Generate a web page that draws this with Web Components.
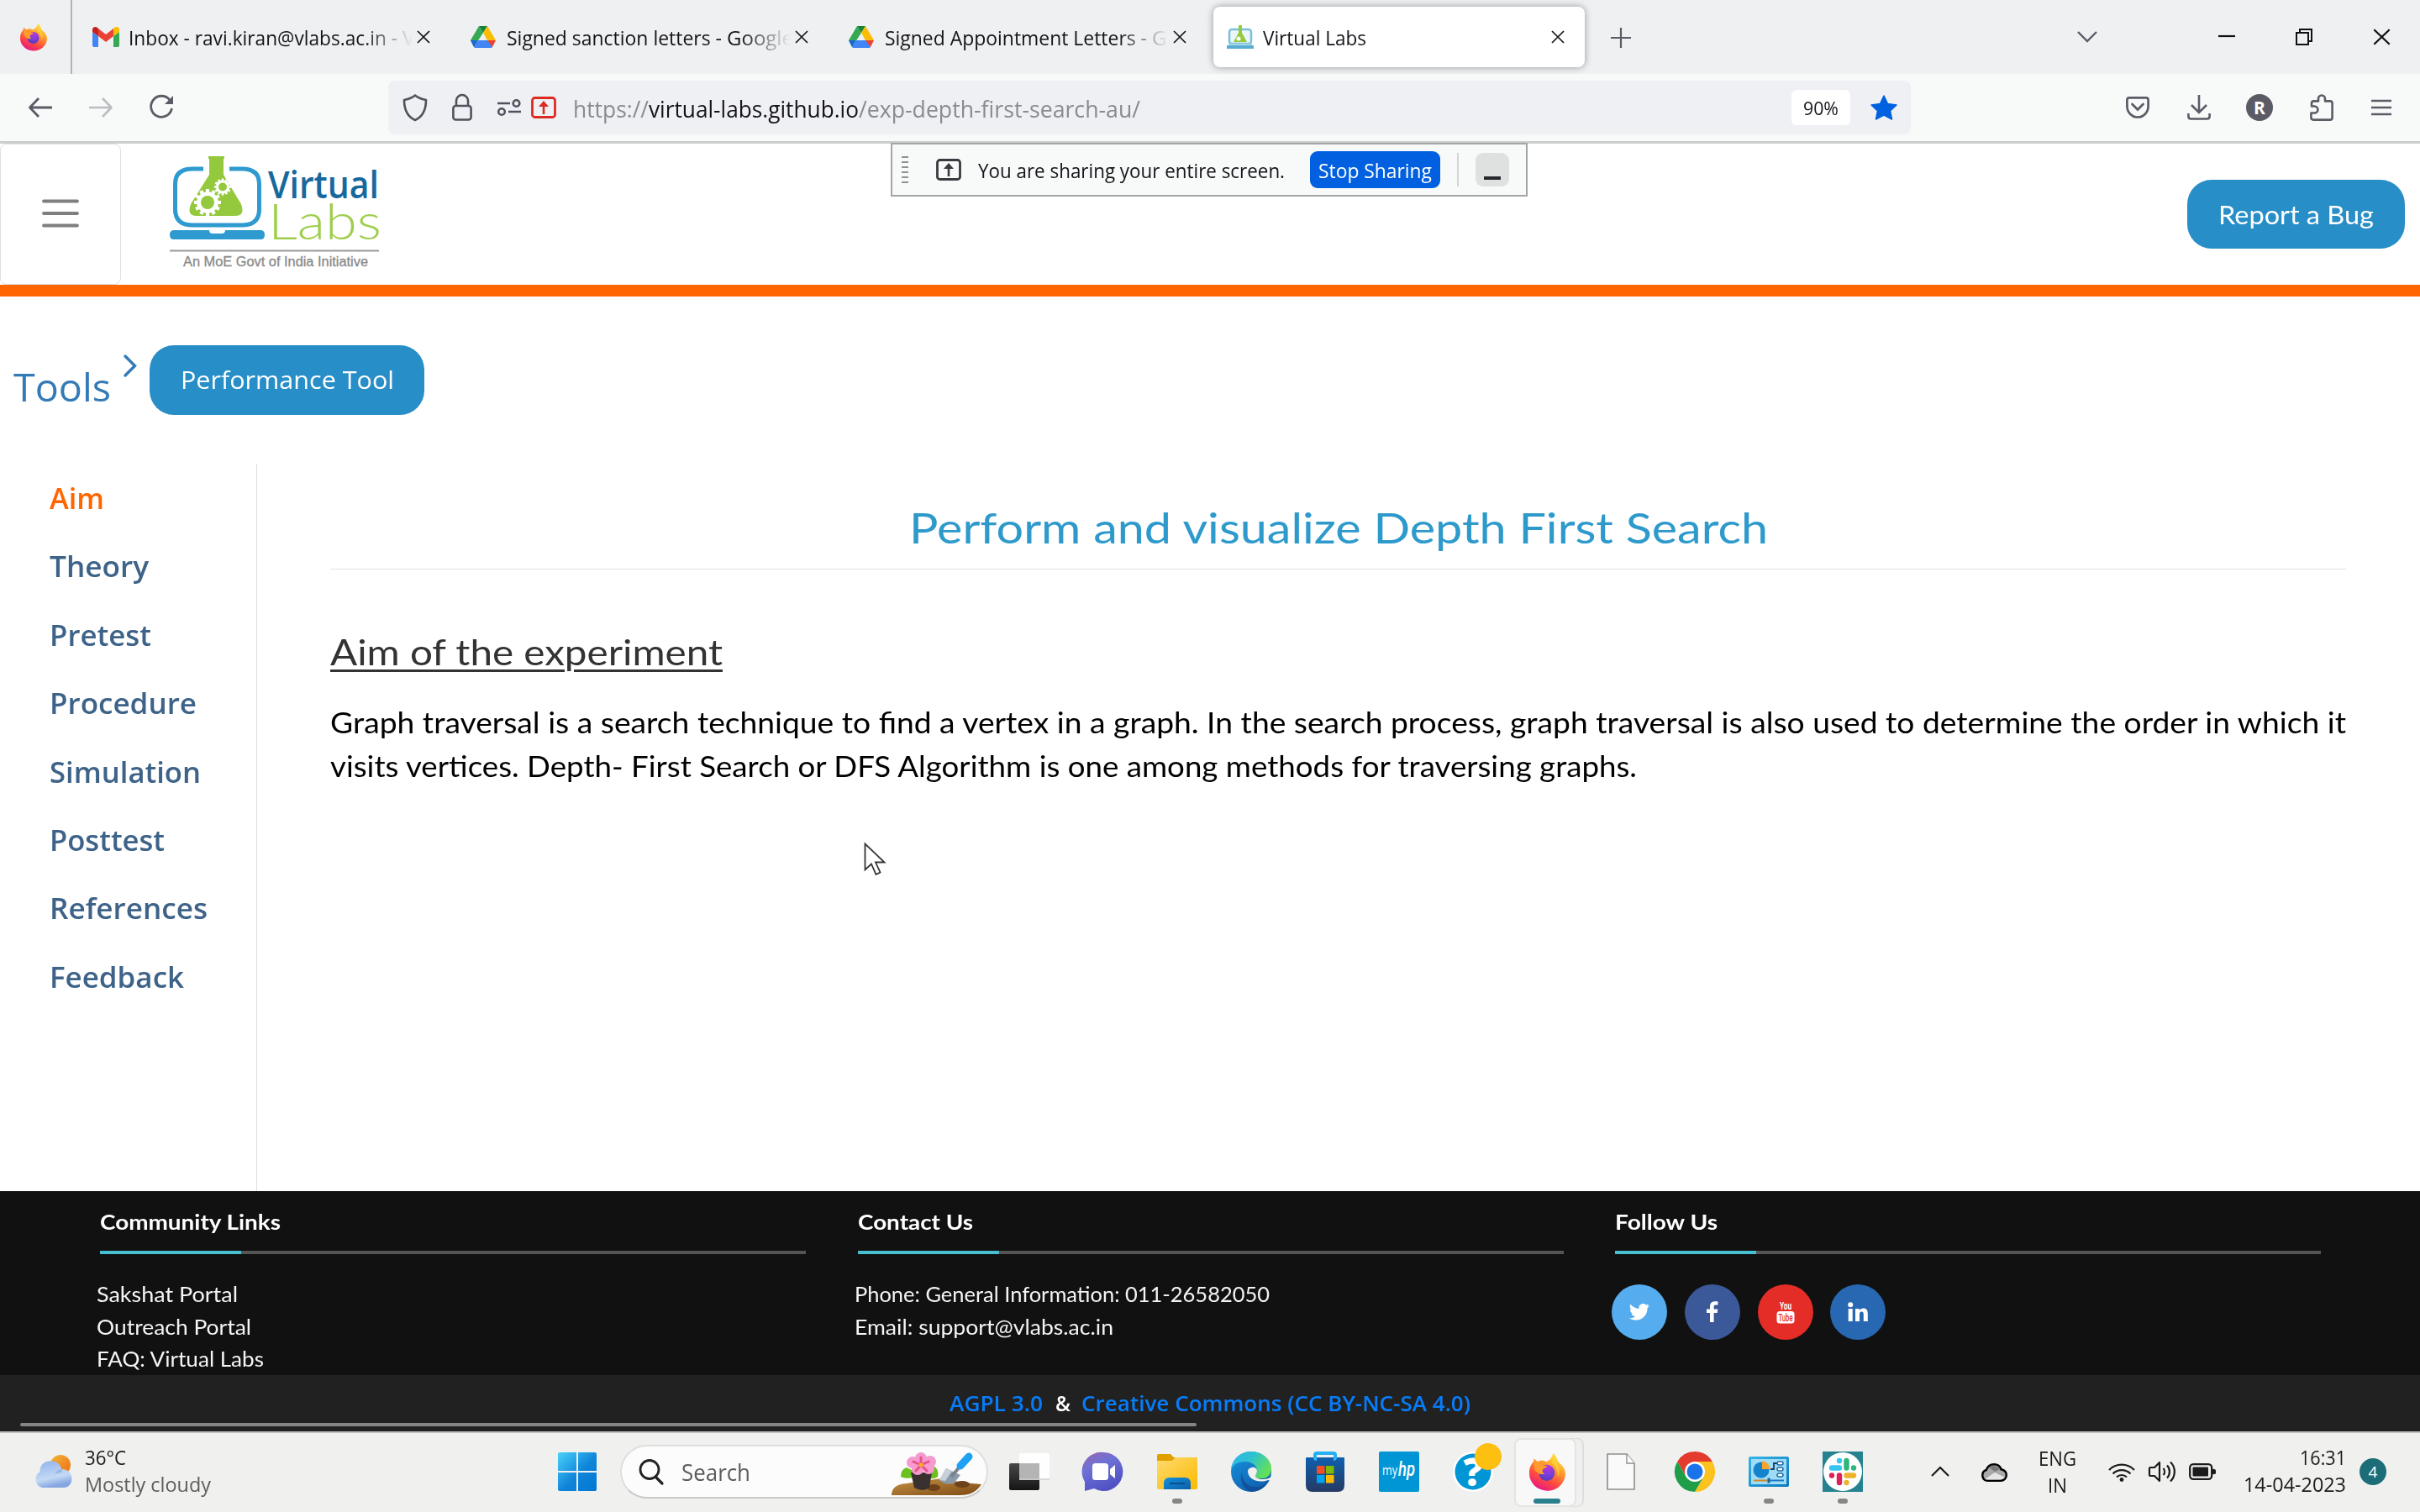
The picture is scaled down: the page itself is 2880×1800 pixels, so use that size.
<!DOCTYPE html>
<html lang="en">
<head>
<meta charset="utf-8">
<title>Virtual Labs</title>
<style>
html,body{margin:0;padding:0;background:#fff}
body{width:2880px;height:1800px;overflow:hidden;font-family:"Open Sans","Noto Sans",sans-serif;color:#15141a;font-variant-ligatures:none}
</style>
</head>
<body>
<desk-screen></desk-screen>
<script>
const FIREFOX = `<defs><linearGradient id="fa" x1=".8" y1="0" x2=".3" y2="1"><stop offset="0" stop-color="#fff44f"/><stop offset=".35" stop-color="#ffa32c"/><stop offset=".7" stop-color="#ff4a40"/><stop offset="1" stop-color="#e31587"/></linearGradient><radialGradient id="fb" cx=".6" cy=".2" r=".9"><stop offset="0" stop-color="#b833e1"/><stop offset=".5" stop-color="#7a3fd8"/><stop offset="1" stop-color="#4a3ab8"/></radialGradient></defs>
<path fill="url(#fa)" d="M21 0c3 3 4 5 4.500 7.500 4 3 6.500 6 6.500 10.500A16 15 0 0 1 0 17C0 12 2 9 4 7L4 4.500 7.500 7.500C10 5.500 13 6 15 7.500 18 6 20 4 21 0z"/><circle cx="15.500" cy="17" r="7" fill="url(#fb)"/><path fill="#ff9a2e" d="M4 7c4 0 6 1.500 8.500 3.500L16 11c-1 2-3 2-4 3-.8 1.500 0 3 1.500 4-4 1-7-1-9-4z"/><path fill="#ffd43a" opacity=".75" d="M21 0c3 3 4 6 3.500 9 2 3 3 7 1 12 0-6-2-10-6-13 1.500-2 2-5 1.500-8z"/>`;
const DRIVE = `<path fill="#34a853" d="M10 1 0 18l4 8L15 9z"/><path fill="#188038" d="M10 1h10l-5 8z"/><path fill="#fbbc04" d="M20 1 30 18H20L15 9z"/><path fill="#4285f4" d="M4 26 8 18h14l4 8-1 1H5z"/><path fill="#ea4335" d="M20 18h10l-4 8z"/><path fill="#1967d2" d="M0 18h8l-4 8z"/>`;
const GEAR = (cx,cy,r,c,h) => { let s=''; for(let i=0;i<12;i++) s+=`<rect x="${cx-r*.13}" y="${cy-r}" width="${r*.26}" height="${r*.5}" transform="rotate(${i*30} ${cx} ${cy})"/>`; return `<g fill="${c}">${s}<circle cx="${cx}" cy="${cy}" r="${r*.8}"/></g><circle cx="${cx}" cy="${cy}" r="${r*.5}" fill="${h}"/>`; };

/* name: [viewBox width, viewBox height, markup] */
const ICONS = {
  firefox:[32,32,FIREFOX],
  gmail:[32,24,`<path fill="#4285f4" d="M0 6v16q0 2 2 2h5V11z"/><path fill="#34a853" d="M32 6v16q0 2-2 2h-5V11z"/><path fill="#c5221f" d="M0 6V3c0-3 4-4 6-2l1 1v9z"/><path fill="#fbbc04" d="M32 6V3c0-3-4-4-6-2l-1 1v9z"/><path fill="#ea4335" d="M7 2l9 7 9-7v9l-9 7-9-7z"/>`],
  drive:[30,28,DRIVE],
  vlabs:[32,28,`<rect x="3" y="5" width="26" height="17" rx="3" fill="#eaf6fb" stroke="#7cc0dc" stroke-width="2.500"/><path fill="#93cb3c" d="M14 0h4v9l6 11H8l6-11z"/><circle cx="14" cy="16" r="2.500" fill="#fff"/><path fill="#5aaed3" d="M0 24h32v4H0z"/><path fill="#a9d6e8" d="M2 22h28v2H2z"/>`],
  x:[16,16,`<path d="M1 1l14 14M15 1 1 15" stroke="currentColor" stroke-width="1.700" fill="none"/>`],
  plus:[24,24,`<path d="M12 0v24M0 12h24" stroke="#5b5b66" stroke-width="2.200"/>`],
  down:[24,14,`<path d="M1 1l11 11L23 1" stroke="#5b5b66" stroke-width="2.400" fill="none"/>`],
  min:[20,20,`<path d="M0 9h20" stroke="#111" stroke-width="2.200"/>`],
  restore:[20,20,`<path d="M1 5h14v14H1zM5 5V1h14v14h-4" stroke="#111" stroke-width="2" fill="none"/>`],
  back:[28,24,`<path d="M28 12H2M12 1 1.500 12 12 23" stroke="#5b5b66" stroke-width="2.800" fill="none" stroke-linejoin="round"/>`],
  fwd:[28,24,`<path d="M0 12h26M16 1l10.500 11L16 23" stroke="#bcbcc2" stroke-width="2.600" fill="none" stroke-linejoin="round"/>`],
  reload:[28,28,`<path d="M24 5A12.500 12.500 0 1 0 26.500 15" stroke="#5b5b66" stroke-width="2.800" fill="none"/><path d="M28 0v10H18z" fill="#5b5b66"/>`],
  shield:[30,32,`<path d="M15 1.500C11 5 7 6 2 7c0 12 4 20 13 24 9-4 13-12 13-24-5-1-9-2-13-5.500z" stroke="#52525e" stroke-width="2.600" fill="none" stroke-linejoin="round"/>`],
  lock:[24,32,`<rect x="1.400" y="14" width="21.200" height="16.500" rx="3" stroke="#52525e" stroke-width="2.600" fill="none"/><path d="M5 14V8a7 7 0 0 1 14 0v6" stroke="#52525e" stroke-width="2.600" fill="none"/>`],
  perm:[28,20,`<g stroke="#52525e" stroke-width="2.600" fill="none"><path d="M0 5h15M13 15h15"/><circle cx="22.500" cy="5" r="3.800"/><circle cx="5" cy="15" r="3.800"/></g>`],
  share:[30,26,`<rect x="1.500" y="1.500" width="27" height="23" rx="3" stroke="currentColor" stroke-width="2.800" fill="none"/><path d="M15 21V9" stroke="currentColor" stroke-width="2.600"/><path d="M15 5l6 7H9z" fill="currentColor"/>`],
  star:[32,30,`<path fill="#0061e0" stroke="#0061e0" stroke-width="1.500" stroke-linejoin="round" d="M16 1l4.500 9.500L31 12l-7.500 7L25.500 29 16 24 6.500 29l2-10L1 12l10.500-1.500z"/>`],
  pocket:[28,26,`<path d="M4 1.400h20q2.600 0 2.600 2.600v7.500a12.600 13 0 0 1-25.200 0V4Q1.400 1.400 4 1.400z" stroke="#5b5b66" stroke-width="2.700" fill="none"/><path d="M7.500 9l6.500 6.500L20.500 9" stroke="#5b5b66" stroke-width="2.700" fill="none" stroke-linecap="round"/>`],
  dl:[28,30,`<path d="M14 0v20M5 12l9 9 9-9M1.400 22v3.500q0 3 3 3h19.200q3 0 3-3V22" stroke="#5b5b66" stroke-width="2.600" fill="none"/>`],
  puzzle:[28,32,`<path d="M4 30.600q-2.600 0-2.600-2.600v-5.500h4a4 4 0 0 0 0-8H2V11q0-2.600 2.600-2.600H10V5.500a4 4 0 0 1 8 0v2.900h6q2.600 0 2.600 2.600v17q0 2.600-2.600 2.600z" stroke="#5b5b66" stroke-width="2.600" fill="none" stroke-linejoin="round"/>`],
  menu:[24,20,`<path d="M0 2h24M0 10h24M0 18h24" stroke="#5b5b66" stroke-width="2.600"/>`],
  burger:[44,34,`<path d="M2 2.500h40M2 17h40M2 31.500h40" stroke="#7f7f7f" stroke-width="3.800" stroke-linecap="round"/>`],
  logo:[252,138,`<path d="M40 15H27Q6.500 15 6.500 33V63Q6.500 82 27 82H86Q106.500 82 106.500 63V33Q106.500 15 86 15H71" fill="none" stroke="#2e9acf" stroke-width="5"/>
<path fill="#94c93d" d="M46 0h19v3h-1v19l21 35q5 14-7 14H32q-12 0-7-14l22-35V3h-1z"/>${GEAR(45,55,16,'#fff','#94c93d')}${GEAR(63,36.500,10,'#fff','#94c93d')}
<path fill="#2e9acf" d="M5 88h42q0 4 4 4h11q4 0 4-4h42q5 0 5 5.500t-5 5.500H5q-5 0-5-5.500T5 88z"/>
<text x="117" y="50" font-family="Open Sans,sans-serif" font-weight="600" font-size="46" fill="#17699d" textLength="132" lengthAdjust="spacingAndGlyphs">Virtual</text>
<text x="117" y="99" font-family="Lato,sans-serif" font-weight="300" font-size="59" fill="#9fce4e" textLength="135" lengthAdjust="spacingAndGlyphs">Labs</text>
<path d="M0 112.500h249" stroke="#999" stroke-width="2"/>
<text x="16" y="131" font-family="Liberation Sans,sans-serif" font-size="16" fill="#8a8a8a" stroke="#8a8a8a" stroke-width=".3" textLength="220" lengthAdjust="spacingAndGlyphs">An MoE Govt of India Initiative</text>`],
  chev:[16,27,`<path d="M2 2l11.500 11.500L2 25" stroke="#337ab7" stroke-width="3.400" fill="none" stroke-linecap="round"/>`],
  twitter:[24,20,`<path fill="#fff" d="M24 2.500l-2.500 2.700C21.800 13 16 19.500 8 19.500c-3 0-6-.9-8-2.300 2.500.2 5-.5 7-2-2-.1-4-1.500-4.600-3.400h2C2 11 .7 9 .7 6.800l2.200.6C.7 5.800.1 3 1.400.8c2.500 3 6 4.900 10.200 5.100C10.900 2.500 13.500 0 16.500 0c1.500 0 2.700.6 3.600 1.500L23.300.3 21.300 3z"/>`],
  fb:[14,26,`<path fill="#fff" d="M4 25V14H0V9.500h4V6.200C4 2.200 6.500.2 10 .2c1.500 0 3 .1 3.500.2v4h-2.600C9 4.400 8.600 5.400 8.600 6.800v2.700h4.700L12.700 14H8.600v11z"/>`],
  yt:[24,28,`<text x="12" y="11" text-anchor="middle" font-family="Roboto,sans-serif" font-weight="700" font-size="13" fill="#fff" textLength="14" lengthAdjust="spacingAndGlyphs">You</text><rect x="1.500" y="13" width="21" height="14.500" rx="3.500" fill="#fff"/><text x="12" y="25" text-anchor="middle" font-family="Roboto,sans-serif" font-weight="500" font-size="12" fill="#e52d27" textLength="17" lengthAdjust="spacingAndGlyphs">Tube</text>`],
  li:[24,24,`<circle cx="3.200" cy="3.200" r="3" fill="#fff"/><path fill="#fff" d="M.7 8h5v15h-5zM9 8h4.800v2.200c1-1.700 2.700-2.600 4.700-2.600 4 0 5.300 2.700 5.300 6.500V23h-5v-8c0-2-.3-3.600-2.300-3.600-2.100 0-2.500 1.700-2.500 3.500V23H9z"/>`],
  weather:[48,42,`<defs><linearGradient id="ws" x1="0" y1="0" x2="1" y2="1"><stop offset="0" stop-color="#f0b73c"/><stop offset="1" stop-color="#f06a12"/></linearGradient><linearGradient id="wc" x1="0" y1="0" x2=".3" y2="1"><stop offset="0" stop-color="#8eb0ee"/><stop offset=".7" stop-color="#c4d9f3"/><stop offset="1" stop-color="#86a6e2"/></linearGradient></defs><circle cx="34" cy="13" r="12" fill="url(#ws)"/><path fill="url(#wc)" d="M12 40A10.500 10.500 0 0 1 9.500 21C9 4 34 5 35 18 51 17 51 40 38 40z"/><path fill="#7fa0df" opacity=".55" d="M27 24q3-6 9-6l-1 4q-4 0-8 2z"/>`],
  start:[46,46,`<defs><linearGradient id="wi" x1="0" y1="0" x2="1" y2="1"><stop offset="0" stop-color="#4bd2fb"/><stop offset=".55" stop-color="#0f84d9"/><stop offset="1" stop-color="#0078d4"/></linearGradient></defs><path fill="url(#wi)" d="M2 0h20v22H0V2q0-2 2-2zM24 0h20q2 0 2 2v20H24zM0 24h22v22H2q-2 0-2-2zM24 24h22v20q0 2-2 2H24z"/>`],
  search:[30,30,`<circle cx="13" cy="12.500" r="11" stroke="#222" stroke-width="2.800" fill="none"/><path d="M20 21l8 8" stroke="#222" stroke-width="3.200" stroke-linecap="round"/>`],
  garden:[107,51,`<defs><linearGradient id="gs" x1="0" y1="0" x2="1" y2="1"><stop offset="0" stop-color="#c79345"/><stop offset="1" stop-color="#7c4a15"/></linearGradient></defs><path fill="url(#gs)" d="M0 50Q0 37 18 36l20-3 22-3 25 5 22 2Q99 50 82 50z"/><ellipse cx="50" cy="41" rx="8" ry="4" fill="#6d421a"/><ellipse cx="84" cy="37" rx="9" ry="4" fill="#6d421a"/><path fill="#6cc11f" d="M11 28q0-9 7-11l10 5-3 7q-9 2-14-1zM55 28q2-9-5-13l-10 6 6 9q5 1 9-2z"/><path fill="#3a302f" d="M23 23h25l-3 18q-8 6-18 0z"/><g fill="#f69ad0"><circle cx="35" cy="6" r="7"/><circle cx="46" cy="10" r="7"/><circle cx="44" cy="18" r="7"/><circle cx="31" cy="19" r="7"/><circle cx="25" cy="11" r="7"/></g><path d="M35 14V5M35 14l9-4M35 14l7 7M35 14l-6 7M35 14l-9-4" stroke="#e8538a" stroke-width="3" stroke-linecap="round"/><circle cx="35" cy="14" r="2.500" fill="#ffb01f"/><path fill="#8b9aa8" d="M65 18l17 8-8 10q-12 2-17-4z"/><path fill="#c5d0d8" d="M65 18l7 3-8 12-7-1z"/><path d="M71 28l12-14" stroke="#77828c" stroke-width="4"/><path d="M82 15l10-11" stroke="#1ea1f2" stroke-width="9" stroke-linecap="round"/>`],
  taskview:[48,44,`<defs><linearGradient id="tv" x1="0" y1="0" x2="0" y2="1"><stop offset="0" stop-color="#484848"/><stop offset="1" stop-color="#151515"/></linearGradient></defs><rect y="12" width="36" height="32" rx="2" fill="url(#tv)"/><rect x="12" width="36" height="32" rx="2" fill="#fff" opacity=".9"/><rect x="12" y="12" width="24" height="20" fill="#b4b4b4"/><path d="M12 31h36" stroke="#ccc" stroke-width="1.500"/>`],
  chat:[46,46,`<defs><linearGradient id="ch" x1="0" y1="0" x2=".5" y2="1"><stop offset="0" stop-color="#9a64ae"/><stop offset=".4" stop-color="#6f72d4"/><stop offset="1" stop-color="#5052c4"/></linearGradient></defs><path fill="url(#ch)" d="M23 0a23 23 0 1 1-11 43L1 46V35A23 23 0 0 1 23 0z"/><rect x="10" y="13" width="19" height="20" rx="3.500" fill="#fff"/><path fill="#fff" d="M31 20l6-5v16l-6-5z"/>`],
  folder:[48,44,`<defs><linearGradient id="fo" x1="0" y1="0" x2="1" y2="1"><stop offset="0" stop-color="#ffdb70"/><stop offset="1" stop-color="#fbb900"/></linearGradient><linearGradient id="fp" x1="0" y1="0" x2="1" y2="1"><stop offset="0" stop-color="#1390dd"/><stop offset="1" stop-color="#0c5fa8"/></linearGradient></defs><path fill="#e0a100" d="M0 3q0-2 2-2h14l4 4h26q2 0 2 2v8H0z"/><path fill="url(#fo)" d="M0 10q0-1 1-1h17l4-4h24q2 0 2 2v34q0 2-2 2H2q-2 0-2-2z"/><path fill="url(#fp)" d="M8 43V36q0-7 7-7h18q7 0 7 7v7z"/><path d="M15 36h18" stroke="#0a4e8c" stroke-width="2"/>`],
  edge:[48,48,`<defs><linearGradient id="e1" x1="0" y1="0" x2="1" y2=".5"><stop offset="0" stop-color="#34b5ef"/><stop offset=".5" stop-color="#2dc1d0"/><stop offset="1" stop-color="#62e05a"/></linearGradient><linearGradient id="e2" x1="0" y1="0" x2=".6" y2="1"><stop offset="0" stop-color="#1696df"/><stop offset="1" stop-color="#1060b0"/></linearGradient></defs><circle cx="24" cy="24" r="24" fill="url(#e2)"/><path fill="url(#e1)" d="M0 22C1 8 12 0 24 0c14 0 24 10 24 20 0 8-5 12-11 12-5 0-8-1-8-3 0-1 2-3 2-6 0-6-6-11-14-11C8 12 2 16 0 22z"/><path fill="#124a8f" d="M17 12c-6 8-5 20 1 26 8 7 19 5 26-2C39 44 32 48 24 48 14 45 10 34 13 24c1-6 2-9 4-12z" opacity=".75"/><path fill="#f0f0ef" d="M22 20c5-3 9 0 9 3s-2 5-2 6c0 2 4 4 9 4 4 0 8-1 11-4l1 6-6-1c-11 4-23 0-24-10q0-3 2-4z"/>`],
  store:[48,48,`<defs><linearGradient id="st" x1="0" y1="0" x2="0" y2="1"><stop offset="0" stop-color="#0f5fae"/><stop offset="1" stop-color="#253a64"/></linearGradient></defs><path d="M12 12V4q0-2 2-2h20q2 0 2 2v8" stroke="#23b0f5" stroke-width="4" fill="none"/><path fill="url(#st)" d="M1 8q0-1 1-1h44q1 0 1 1v32q0 8-8 8H9q-8 0-8-8z"/><path fill="#35b3f3" d="M10 7h4v4q-4 0-4-4zM34 7h4q0 4-4 4z"/><path fill="#f25022" d="M14 17h9.500v9.500H14z"/><path fill="#7fba00" d="M25 17h9.500v9.500H25z"/><path fill="#00a4ef" d="M14 28h9.500v9.500H14z"/><path fill="#ffb900" d="M25 28h9.500v9.500H25z"/>`],
  hp:[48,48,`<rect width="48" height="48" rx="2" fill="#0096d6"/><text x="4" y="28" font-family="Open Sans,sans-serif" font-size="17" fill="#fff" textLength="18" lengthAdjust="spacingAndGlyphs">my</text><text x="23" y="29" font-family="Roboto,sans-serif" font-weight="500" font-style="italic" font-size="23" fill="#fff" textLength="20" lengthAdjust="spacingAndGlyphs">hp</text>`],
  help:[58,58,`<circle cx="24" cy="34" r="24" fill="#fff"/><circle cx="24" cy="34" r="21.500" fill="#0096d6"/><text x="24" y="51" text-anchor="middle" font-family="Open Sans,sans-serif" font-weight="800" font-size="46" fill="#fff">?</text><circle cx="42" cy="16" r="16" fill="#fdc010"/>`],
  page:[34,44,`<path fill="#fafafa" stroke="#8d8d8d" stroke-width="1.600" d="M1 1h23l9 11v31H1z"/><path d="M24 1v11h9" fill="#fff" stroke="#8d8d8d" stroke-width="1.400"/>`],
  chrome:[48,48,`<path fill="#e33b2e" d="M3.200 12A24 24 0 0 1 44.800 12H24L13.600 30z"/><path fill="#fcc31e" d="M44.800 12A24 24 0 0 1 24 48L34.400 30 24 12z"/><path fill="#1e9e49" d="M24 48A24 24 0 0 1 3.200 12L13.600 30H34.400z"/><circle cx="24" cy="24" r="12" fill="#fff"/><circle cx="24" cy="24" r="9.500" fill="#1a73e8"/>`],
  panel:[48,36,`<defs><linearGradient id="pn" x1="0" y1="0" x2="1" y2="1"><stop offset="0" stop-color="#36b6e8"/><stop offset="1" stop-color="#0c78be"/></linearGradient></defs><rect width="48" height="36" rx="2" fill="url(#pn)"/><rect x="3" y="3" width="42" height="30" fill="#9fdcf8"/><circle cx="15" cy="16" r="9.500" fill="#1583cb"/><path fill="#f7a32b" d="M16 15V5.500A9.500 9.500 0 0 1 25.500 15z"/><path d="M26 15h4V8h5M30 15" stroke="#123b63" stroke-width="1.800" fill="none"/><g fill="#fff" stroke="#1f6da8" stroke-width="1.600"><rect x="34" y="6" width="7" height="4" rx="2"/><rect x="34" y="13" width="7" height="4" rx="2"/><rect x="34" y="20" width="7" height="4" rx="2"/></g><path d="M6 28.500h17" stroke="#d08b2c" stroke-width="2"/><path d="M23 28.500h19" stroke="#1f7cc2" stroke-width="2"/><path d="M24 25.500v6" stroke="#1667a8" stroke-width="3"/>`],
  slack:[48,48,`<path fill="#26828f" d="M0 0h48v48H0z"/><circle cx="24" cy="24" r="23" fill="#fff"/><g stroke-width="6.400" stroke-linecap="round"><path stroke="#36c5f0" d="M20 11v0M11 19.500h9"/><path stroke="#2eb67d" d="M28.500 11v8.500M37 19.500v0"/><path stroke="#ecb22e" d="M28.500 28.500h8.500M28.500 37v0"/><path stroke="#e01e5a" d="M20 28.500V37M11 28.500v0"/></g>`],
  up:[22,12,`<path d="M1 11L11 1l10 10" stroke="#1b1b1b" stroke-width="2.200" fill="none"/>`],
  cloud:[32,22,`<path d="M8 20.800A6.600 6.600 0 0 1 6.800 8C8.500 3 12 1.200 16 1.200c4.500 0 7.500 2.600 8.500 6C29 8 30.800 11 30.800 14c0 4-3 6.800-6.800 6.800z" fill="#a9a9a9" stroke="#000" stroke-width="2.400"/><path fill="#e6e6e6" d="M5 19l12-8 12 6-5 2.600H8z"/><path fill="#777" d="M10 5q6-5 13 2l-6 3z"/>`],
  wifi:[32,24,`<g stroke="#1b1b1b" stroke-width="2.200" fill="none"><path d="M1 10a21 21 0 0 1 30 0M5.500 14.500a15 15 0 0 1 21 0M10 18.500a8.500 8.500 0 0 1 12 0"/></g><circle cx="16" cy="21.500" r="2.400" fill="#1b1b1b"/>`],
  vol:[32,26,`<g stroke="#1b1b1b" stroke-width="2.200" fill="none" stroke-linejoin="round"><path d="M1 9q0-1 1-1h5l6-6v22l-6-6H2q-1 0-1-1zM17.500 9a6 6 0 0 1 0 8M22 5.500a11 11 0 0 1 0 15M26 1.500a16 16 0 0 1 0 23"/></g>`],
  batt:[32,20,`<rect x="1.200" y="1.200" width="26" height="17.600" rx="4" fill="none" stroke="#1b1b1b" stroke-width="2.300"/><rect x="4.500" y="4.500" width="18.500" height="11" rx="1" fill="#1b1b1b"/><path fill="#1b1b1b" d="M28 7h2q2 0 2 1.500v3q0 1.500-2 1.500h-2z"/>`],
  cursor:[26,40,`<path d="M1.500 1.500v31l7.500-7 5.500 12.500 5-2.500L14 23.500h10.500z" fill="#fff" stroke="#333" stroke-width="1.800"/>`]
};
const def = (name, css, html, hook) => customElements.define(name, class extends HTMLElement {
  connectedCallback(){
    if(this.shadowRoot) return;
    const r = this.attachShadow({mode:'open'});
    r.innerHTML = `<style>:host{display:block;box-sizing:border-box}*{box-sizing:border-box}${css}</style>` + (typeof html==='function' ? html(this) : html);
    if(hook) hook(this, r);
  }
});

/* <ui-icon n="name" w h>: one inline drawing, sized in px */
def('ui-icon', ':host{flex:none;line-height:0}svg{display:block;overflow:visible}', e => {
  const [w,h,m] = ICONS[e.getAttribute('n')];
  return `<svg width="${e.getAttribute('w')||w}" height="${e.getAttribute('h')||h}" viewBox="0 0 ${w} ${h}" preserveAspectRatio="none">${m}</svg>`;
});
/* <fit-text w>: a single line whose glyphs are stretched to w px */
def('fit-text', ':host{flex:none;white-space:nowrap}span{display:inline-block;transform-origin:0 50%;text-decoration:inherit;text-underline-offset:inherit}', '<span><slot></slot></span>', (e,r) => {
  const s = r.querySelector('span'), w = +e.getAttribute('w');
  e.style.width = w+'px';
  s.style.transform = `scaleX(${w/s.getBoundingClientRect().width})`;
});
def('browser-tab', `:host{display:flex;flex:none;align-items:center;width:442px;height:72px;padding-left:16px;border-radius:8px;font:400 24px/32px "Open Sans"}
:host([active]){background:#fff;box-shadow:0 0 8px rgba(0,0,0,.38)}
.i{width:43px;flex:none}.t{display:flex;gap:6px;width:339px;overflow:hidden;white-space:nowrap;padding-top:1px}
:host(:not([active])) .t{-webkit-mask-image:linear-gradient(90deg,#000 278px,transparent 338px);mask-image:linear-gradient(90deg,#000 278px,transparent 338px)}
.c{margin-left:4px}`,
e => `<div class="i"><ui-icon n="${e.getAttribute('icon')}"></ui-icon></div><div class="t"><fit-text w="${e.getAttribute('w')}">${e.getAttribute('label')}</fit-text><span>${e.getAttribute('tail')||''}</span></div><ui-icon class="c" n="x"></ui-icon>`);

def('tab-strip', `:host{display:flex;align-items:center;height:88px;background:#eff0f2}
.pin{width:86px;height:88px;display:flex;align-items:center;padding-left:24px;border-right:2px solid #b2b3b8}
.tabs{display:flex;gap:8px;margin-left:8px}.plus{margin-left:31px;margin-top:2px}.down{margin-left:531px}.w{display:flex;align-items:center;gap:72px;margin-left:144px;color:#111}`,
`<div class="pin"><ui-icon n="firefox"></ui-icon></div><div class="tabs">
<browser-tab icon="gmail" w="320" label="Inbox - ravi.kiran@vlabs.ac.in -" tail="V"></browser-tab>
<browser-tab icon="drive" w="256" label="Signed sanction letters -" tail="Google"></browser-tab>
<browser-tab icon="drive" w="312" label="Signed Appointment Letters -" tail="G"></browser-tab>
<browser-tab active icon="vlabs" w="123" label="Virtual Labs"></browser-tab></div>
<ui-icon class="plus" n="plus"></ui-icon><ui-icon class="down" n="down"></ui-icon>
<div class="w"><ui-icon n="min"></ui-icon><ui-icon n="restore"></ui-icon><ui-icon n="x" w="21" h="20"></ui-icon></div>`);

def('nav-bar', `:host{display:flex;align-items:center;height:83px;background:#f8faf9;border-bottom:3px solid #cbcdcd;padding-left:34px}
.n{display:flex;align-items:center;gap:44px;flex:none}
.url{display:flex;flex:none;align-items:center;width:1812px;height:64px;margin-left:256px;padding-left:17px;background:#eff0f3;border-radius:8px;font:400 28px/36px "Open Sans";color:#8a8a8f}
.url .a{margin-left:29px}.url .b{margin-left:30px}.url .c{margin-left:12px;color:#dd2a22}.host{color:#15141a}
.z{flex:none;margin-left:775px;width:70px;height:42px;border-radius:6px;background:#fff;padding:5px 0 0 14px;font:400 22px/32px "Open Sans";color:#15141a}.s{margin-left:24px}
.tx{display:flex;flex:none;margin-left:20px;padding-top:2px}
.r{display:flex;flex:none;align-items:center;margin-left:256px}.r>*{margin-right:45px}
.av{width:32px;height:32px;border-radius:50%;background:#5b5b66;color:#fff;font:700 21px/32px "Open Sans";text-align:center}`,
`<div class="n"><ui-icon n="back"></ui-icon><ui-icon n="fwd"></ui-icon><ui-icon n="reload"></ui-icon></div>
<div class="url"><ui-icon n="shield"></ui-icon><ui-icon class="a" n="lock"></ui-icon><ui-icon class="b" n="perm"></ui-icon><ui-icon class="c" n="share"></ui-icon>
<div class="tx"><fit-text w="90">https://</fit-text><fit-text class="host" w="250">virtual-labs.github.io</fit-text><fit-text w="335">/exp-depth-first-search-au/</fit-text></div>
<div class="z"><fit-text w="42">90%</fit-text></div><ui-icon class="s" n="star"></ui-icon></div>
<div class="r"><ui-icon n="pocket"></ui-icon><ui-icon n="dl" style="margin-right:42px"></ui-icon><div class="av" style="margin-right:44px">R</div><ui-icon n="puzzle"></ui-icon><ui-icon n="menu" style="margin-right:0"></ui-icon></div>`);

def('share-bar', `:host{position:absolute;left:1060px;top:170px;width:758px;height:64px;display:flex;align-items:center;background:#f8faf9;border:2px solid #a3a6a6;font:400 24px/32px "Open Sans";color:#15141a;padding-left:11px}
.g{width:8px;height:32px;background:repeating-linear-gradient(#909292 0 2px,transparent 2px 6px)}
.i{margin:0 20px 0 33px;color:#3a3a40}.t{margin-top:2px}.b{margin-left:30px;width:155px;height:44px;border-radius:9px;background:#0060df;color:#fff;padding:7px 10px 5px}
.s{width:2px;height:40px;background:#d3d5d5;margin-left:20px}.m{margin-left:20px;width:40px;height:40px;border-radius:9px;background:#dfe1e1;padding:28px 10px 8px}.m i{display:block;height:4px;background:#27282b}`,
`<div class="g"></div><ui-icon class="i" n="share"></ui-icon><fit-text class="t" w="365">You are sharing your entire screen.</fit-text><div class="b"><fit-text w="135">Stop Sharing</fit-text></div><div class="s"></div><div class="m"><i></i></div>`);

def('pill-button', `:host{display:flex;align-items:center;justify-content:center;background:#288ec8;color:#fff;border-radius:29px}`, '<slot></slot>');

def('lab-header', `:host{display:flex;align-items:flex-start;height:182px;border-bottom:14px solid #f60;background:#fff}
.m{width:144px;height:168px;border:1px solid #dfdfdf;border-radius:8px;padding:65px 0 0 49px}
.l{margin:15px 0 0 58px}pill-button{margin:43px 18px 0 auto;width:259px;height:82px;font:400 30px/40px Lato}pill-button fit-text{margin-top:-1px}`,
`<div class="m"><ui-icon n="burger"></ui-icon></div><ui-icon class="l" n="logo"></ui-icon><pill-button><fit-text w="185">Report a Bug</fit-text></pill-button>`);

def('lab-tools', `:host{display:flex;align-items:flex-start;height:199px;padding:58px 0 0 16px}
.t{font:400 46px/60px "Open Sans";color:#337ab7;margin-top:19px}ui-icon{margin:11px 15px 0 16px}pill-button{width:327px;height:83px;font:400 29px/40px "Open Sans"}pill-button fit-text{margin-top:-1px}`,
`<fit-text class="t" w="116">Tools</fit-text><ui-icon n="chev" style="margin-left:15px"></ui-icon><pill-button><fit-text w="254">Performance Tool</fit-text></pill-button>`);

const NAV = [['Aim',65],['Theory',118],['Pretest',121],['Procedure',175],['Simulation',180],['Posttest',137],['References',188],['Feedback',160]];
def('lab-side', `:host{width:306px;height:866px;border-right:1px solid #dedede;padding-left:59px;font:600 35px/81.400px "Open Sans";color:#3e6389}fit-text:first-of-type{color:#f60}`,
NAV.map(([t,w])=>`<fit-text w="${w}">${t}</fit-text>`).join(''));

def('lab-article', `:host{padding:40px 0 0 87px;width:2486px;font-family:Lato}
h1{margin:0;height:86px;border-bottom:1px solid #e3e3e3;display:flex;justify-content:center;font:400 51px/72px Lato;color:#2e9acc}
h2{margin:68px 0 0;font:400 42px/60px Lato;color:#333}h2 fit-text{text-decoration:underline 2.600px;text-underline-offset:5px}
p{margin:28px 0 0;font:400 34px/52px Lato;color:#000}`,
`<h1><fit-text w="1022">Perform and visualize Depth First Search</fit-text></h1>
<h2><fit-text w="467">Aim of the experiment</fit-text></h2>
<p><fit-text w="2399">Graph traversal is a search technique to find a vertex in a graph. In the search process, graph traversal is also used to determine the order in which it</fit-text><fit-text w="1555">visits vertices. Depth- First Search or DFS Algorithm is one among methods for traversing graphs.</fit-text></p>`);

def('footer-column', `:host{width:901.700px;font:400 25px/38.500px Lato;color:#f4f4f4}
.h{margin-left:4px;font:700 25px/36px Lato;color:#fff}.r{display:flex;width:840px;height:4px;margin:17px 0 28px 4px;background:#555}.r i{width:168px;background:#48bfd0}`,
e=>`<fit-text class="h" w="${e.getAttribute('w')}">${e.getAttribute('head')}</fit-text><div class="r"><i></i></div><slot></slot>`);
def('social-dot', `:host{width:66px;height:66px;border-radius:50%;display:flex;align-items:center;justify-content:center}`, e=>`<ui-icon n="${e.getAttribute('n')}"></ui-icon>`);
def('lab-footer', `:host{background:#111;height:286px;position:relative}
.c{display:flex;height:219px;padding:18px 0 0 115px}
.s{display:flex;gap:20.600px;padding-top:8px}
.l{height:67px;background:#212121;display:flex;align-items:center;padding:0 0 1px 1130px;font:600 25px/36px "Open Sans";color:#087cf8}.l .a{margin:0 13px 0 15px;color:#fff}
.b{position:absolute;left:24px;top:276px;width:1400px;height:4px;border-radius:2px;background:#858585}`,
`<div class="c"><footer-column head="Community Links" w="215"><fit-text w="168">Sakshat Portal</fit-text><fit-text w="184">Outreach Portal</fit-text><fit-text w="199">FAQ: Virtual Labs</fit-text></footer-column>
<footer-column head="Contact Us" w="137"><fit-text w="494">Phone: General Information: 011-26582050</fit-text><fit-text w="308">Email: support@vlabs.ac.in</fit-text></footer-column>
<footer-column head="Follow Us" w="122"><div class="s"><social-dot n="twitter" style="background:#55acee"></social-dot><social-dot n="fb" style="background:#3b5998"></social-dot><social-dot n="yt" style="background:#e52d27"></social-dot><social-dot n="li" style="background:#2867b2"></social-dot></div></footer-column></div>
<div class="l"><fit-text w="111">AGPL 3.0</fit-text><fit-text class="a" w="18">&amp;</fit-text><fit-text w="463">Creative Commons (CC BY-NC-SA 4.0)</fit-text></div><div class="b"></div>`);

def('task-item', `:host{position:relative;flex:none;width:88px;height:92px;display:flex;align-items:center;justify-content:center}
:host([run])::after{content:"";position:absolute;left:38px;top:78px;width:12px;height:6px;border-radius:3px;background:#868686}
:host([on]){z-index:0}:host([on])::before{content:"";position:absolute;z-index:-1;left:5px;top:6px;width:70px;height:78px;border-radius:8px;background:#f8f8f8;border:2px solid #e4e4e3;box-shadow:8px 0 0 -1px #f0f0ef,9px 0 0 0 #dededd}
:host([on])::after{content:"";position:absolute;left:28px;top:78px;width:32px;height:6px;border-radius:3px;background:#2a7f8e}`, '<slot></slot>');

def('task-bar', `:host{display:flex;align-items:center;height:96px;padding:0 0 2px 38px;border-top:2px solid #bfbfbf;background:#f0f0ef;font:400 24px/32px "Open Sans";color:#1b1b1b}
.w{margin:-2px 0 0 15px}.g{color:#5d5d5d}
.start{margin-left:413px}
.pill{display:flex;align-items:center;flex:none;width:438px;height:64px;margin-left:28px;padding-left:20px;border-radius:32px;background:#fcfcfc;border:2px solid #dedede;border-bottom-color:#c9c9c9;font-size:27px;color:#5b5b5b;overflow:hidden}
.pill fit-text{margin:2px 0 0 21px}.pill .p{margin:6px 0 0 168px}
.apps{display:flex;margin-left:5px}
.e{margin:-1px 37px 0 36px;width:47px;display:flex;flex-direction:column;align-items:center}
.d{margin:-2px 0 0 33px;width:122px;display:flex;flex-direction:column;align-items:flex-end}
.n{margin-left:16px;width:32px;height:32px;border-radius:50%;background:#1d6d78;color:#fff;font-size:19px;text-align:center}`,
`<ui-icon n="weather"></ui-icon><div class="w"><fit-text w="49">36°C</fit-text><fit-text class="g" w="150">Mostly cloudy</fit-text></div>
<ui-icon class="start" n="start"></ui-icon>
<div class="pill"><ui-icon n="search"></ui-icon><fit-text w="82">Search</fit-text><ui-icon class="p" n="garden"></ui-icon></div>
<div class="apps"><task-item><ui-icon n="taskview"></ui-icon></task-item><task-item><ui-icon n="chat"></ui-icon></task-item><task-item run><ui-icon n="folder"></ui-icon></task-item>
<task-item><ui-icon n="edge"></ui-icon></task-item><task-item><ui-icon n="store"></ui-icon></task-item><task-item><ui-icon n="hp"></ui-icon></task-item>
<task-item><ui-icon n="help" style="margin:-10px 0 0 10px"></ui-icon></task-item><task-item on><ui-icon n="firefox" w="43" h="44"></ui-icon></task-item><task-item><ui-icon n="page"></ui-icon></task-item>
<task-item><ui-icon n="chrome"></ui-icon></task-item><task-item run><ui-icon n="panel"></ui-icon></task-item><task-item run><ui-icon n="slack"></ui-icon></task-item></div>
<ui-icon style="margin-left:61px" n="up"></ui-icon><ui-icon style="margin-left:37px;margin-top:1px" n="cloud"></ui-icon>
<div class="e"><fit-text w="45">ENG</fit-text><fit-text w="23">IN</fit-text></div>
<ui-icon n="wifi"></ui-icon><ui-icon style="margin-left:16px" n="vol"></ui-icon><ui-icon style="margin-left:16px" n="batt"></ui-icon>
<div class="d"><fit-text w="55">16:31</fit-text><fit-text w="122">14-04-2023</fit-text></div><div class="n">4</div>`);

def('desk-screen', `:host{position:relative;width:2880px;height:1800px;overflow:hidden;background:#fff}.m{display:flex}.cur{position:absolute;left:1028px;top:1003px}`,
`<tab-strip></tab-strip><nav-bar></nav-bar><lab-header></lab-header><lab-tools></lab-tools><div class="m"><lab-side></lab-side><lab-article></lab-article></div><lab-footer></lab-footer><task-bar></task-bar><share-bar></share-bar><ui-icon class="cur" n="cursor"></ui-icon>`);
</script>
</body>
</html>
